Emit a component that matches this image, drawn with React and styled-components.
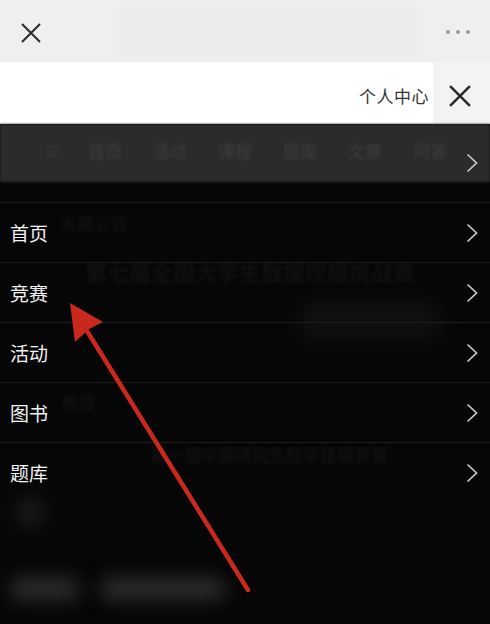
import styled, { createGlobalStyle } from "styled-components";

const GlobalStyle = createGlobalStyle`
  html, body {
    margin: 0;
    padding: 0;
    background: #000;
  }
  * {
    box-sizing: border-box;
  }
`;

const menuItems = ["首页", "竞赛", "活动", "图书", "题库"];
const navItems = ["首页", "活动", "课程", "题库", "文章", "问答"];

const CloseIcon = ({ size, stroke, color }) => (
  <svg width={size} height={size} viewBox="0 0 20 20">
    <path d="M1 1 L19 19 M19 1 L1 19" stroke={color} strokeWidth={stroke} fill="none" />
  </svg>
);

const Chevron = () => (
  <svg width="12" height="20" viewBox="0 0 12 20">
    <polyline points="1.5,1.5 10.5,10 1.5,18.5" stroke="#c8c8c8" strokeWidth="1.7" fill="none" />
  </svg>
);

const App = () => {
  return (
    <>
      <GlobalStyle />
      <Screen>
        <TopBar>
          <IconSlot>
            <CloseIcon size={20} stroke={2} color="#2b2b2b" />
          </IconSlot>
          <TitleShade />
          <Dots>
            <span />
            <span />
            <span />
          </Dots>
        </TopBar>

        <Header>
          <HeaderMain>
            <HeaderTitle>个人中心</HeaderTitle>
          </HeaderMain>
          <HeaderClose>
            <CloseIcon size={22} stroke={2.4} color="#2a2a2a" />
          </HeaderClose>
        </Header>

        <Body>
          <Behind>
            <NavStrip>
              <NavGlyph>≡</NavGlyph>
              {navItems.map((n) => (
                <NavItem key={n}>{n}</NavItem>
              ))}
            </NavStrip>
            <DarkPage>
              <Faint $size={17} $left={60} $top={18}>大赛公告</Faint>
              <Faint $size={22} $left={85} $top={20}>第七届全国大学生数据挖掘挑战赛</Faint>
              <Blob $w={140} $h={40} $left={300} $top={14} $c="#101010" />
              <Faint $size={17} $left={62} $top={48}>推荐</Faint>
              <Faint $size={17} $left={150} $top={28}>第一届中国研究生数学建模竞赛</Faint>
              <Blob $w={30} $h={30} $left={15} $top={30} $c="#181818" />
              <BlobRow>
                <Blob $w={70} $h={24} $left={10} $top={0} $c="#2a2a2a" />
                <Blob $w={125} $h={24} $left={20} $top={0} $c="#2a2a2a" />
              </BlobRow>
            </DarkPage>
          </Behind>

          <Overlay>
            <LeadRow>
              <Chevron />
            </LeadRow>
            <Spacer />
            {menuItems.map((m) => (
              <MenuRow key={m}>
                <MenuLabel>{m}</MenuLabel>
                <Chevron />
              </MenuRow>
            ))}
          </Overlay>
        </Body>

        <ArrowLayer viewBox="0 0 490 624" width="490" height="624">
          <line x1="248" y1="590" x2="87" y2="331" stroke="#c9281d" strokeWidth="4.5" strokeLinecap="round" />
          <polygon points="70,303 103,322 89,329 75,342" fill="#c9281d" />
        </ArrowLayer>
      </Screen>
    </>
  );
};
export default App;

const Screen = styled.div`
  position: relative;
  width: 490px;
  height: 624px;
  overflow: hidden;
  display: flex;
  flex-direction: column;
  font-family: "Noto Sans CJK SC", "Noto Sans", sans-serif;
  background: #060606;
`;

const TopBar = styled.div`
  height: 62px;
  flex-shrink: 0;
  display: flex;
  align-items: center;
  padding: 0 20px 0 21px;
  background: #efefef;
`;

const IconSlot = styled.div`
  width: 20px;
  height: 20px;
  display: flex;
  margin-top: 4px;
`;

const TitleShade = styled.div`
  width: 296px;
  height: 44px;
  margin-left: 79px;
  background: #ebebeb;
  filter: blur(2px);
`;

const Dots = styled.div`
  margin-left: auto;
  display: flex;
  gap: 6px;
  margin-top: 2px;
  span {
    width: 4px;
    height: 4px;
    border-radius: 50%;
    background: #9a9a9a;
  }
`;

const Header = styled.div`
  height: 62px;
  flex-shrink: 0;
  display: flex;
`;

const HeaderMain = styled.div`
  flex: 1;
  background: #ffffff;
  display: flex;
  align-items: center;
  justify-content: flex-end;
  padding: 4px 4px 0 0;
`;

const HeaderTitle = styled.span`
  font-size: 17px;
  color: #333;
  letter-spacing: 0.5px;
`;

const HeaderClose = styled.div`
  width: 57px;
  background: #f3f3f3;
  display: flex;
  align-items: center;
  justify-content: center;
  padding: 6px 4px 0 0;
`;

const Body = styled.div`
  position: relative;
  flex: 1;
`;

const Behind = styled.div`
  display: flex;
  flex-direction: column;
  height: 100%;
`;

const NavStrip = styled.div`
  height: 58px;
  background: #2b2b2b;
  display: flex;
  align-items: center;
  padding: 0 0 6px 44px;
  gap: 31px;
  white-space: nowrap;
  filter: blur(0.9px);
`;

const NavGlyph = styled.span`
  color: #383838;
  font-size: 20px;
  width: 13px;
`;

const NavItem = styled.span`
  color: #3d3d3d;
  font-size: 17px;
`;

const DarkPage = styled.div`
  flex: 1;
  background: #060606;
  display: flex;
  flex-direction: column;
  padding-top: 10px;
`;

const Faint = styled.div`
  font-size: ${(p) => p.$size}px;
  color: #111111;
  margin-left: ${(p) => p.$left}px;
  margin-top: ${(p) => p.$top}px;
  white-space: nowrap;
  filter: blur(1.4px);
  font-weight: 700;
`;

const BlobRow = styled.div`
  display: flex;
  margin-top: 50px;
`;

const Blob = styled.div`
  width: ${(p) => p.$w}px;
  height: ${(p) => p.$h}px;
  margin-left: ${(p) => p.$left}px;
  margin-top: ${(p) => p.$top}px;
  background: ${(p) => p.$c};
  border-radius: 10px;
  filter: blur(9px);
  flex-shrink: 0;
`;

const Overlay = styled.div`
  position: absolute;
  inset: 0;
  display: flex;
  flex-direction: column;
`;

const LeadRow = styled.div`
  height: 60px;
  display: flex;
  align-items: center;
  justify-content: flex-end;
  padding: 18px 12px 0 0;
`;

const Spacer = styled.div`
  height: 18px;
`;

const MenuRow = styled.div`
  height: 60px;
  flex-shrink: 0;
  display: flex;
  align-items: center;
  justify-content: space-between;
  padding: 0 12px 0 10px;
  border-top: 1px solid #1d1d1d;
`;

const MenuLabel = styled.span`
  font-size: 19px;
  color: #f2f2f2;
`;

const ArrowLayer = styled.svg`
  position: absolute;
  left: 0;
  top: 0;
  pointer-events: none;
`;
